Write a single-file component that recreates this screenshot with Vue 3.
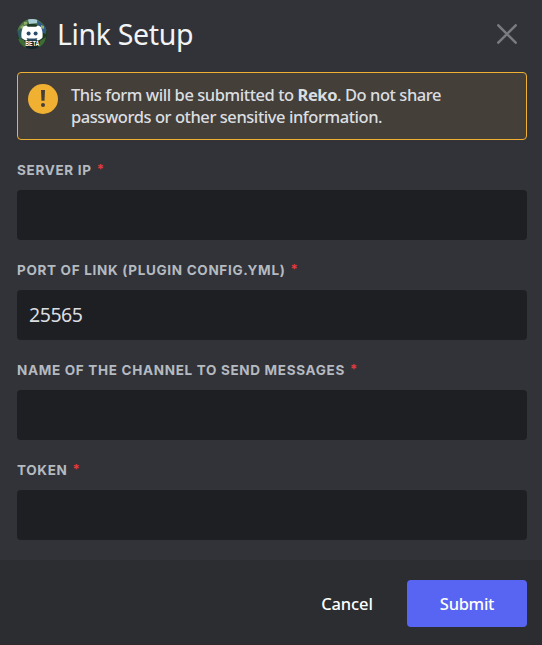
<script setup>
import { ref } from 'vue'

const fields = ref([
  { id: 'ip', label: 'Server IP', value: '' },
  { id: 'port', label: 'Port of link (plugin config.yml)', value: '25565' },
  { id: 'channel', label: 'Name of the channel to send messages', value: '' },
  { id: 'token', label: 'Token', value: '' },
])
</script>

<template>
  <form class="modal" @submit.prevent>
    <header class="header">
      <svg class="avatar" viewBox="0 0 30 30" aria-hidden="true">
        <defs>
          <clipPath id="avatar-clip"><circle cx="15" cy="15" r="15" /></clipPath>
        </defs>
        <g clip-path="url(#avatar-clip)">
          <rect width="30" height="30" fill="#1f3a24" />
          <path d="M0 0h30v12L22 6 12 4 4 12H0z" fill="#4f7a4a" />
          <path d="M11 0h10l-1 4-8 1z" fill="#a9cbd6" />
          <path d="M20 1l9 7v7l-5-2-3-7z" fill="#315a86" />
          <path d="M0 12l5-3 1 10-3 4z" fill="#2f5a60" />
          <path d="M3 8l3-2 2 2-3 2zM7 3l3 0 0 2-3 1zM24 6l3 1 0 3-3-1z" fill="#91ad62" />
          <path d="M1 20l6 1 3 9H5zM23 22l6-4-2 8-5 3z" fill="#3f6b35" />
          <path d="M8 22h14l-2 8H9z" fill="#14242c" />
          <path d="M9.500 6.500l1.300 1.300h8.400l1.300-1.300c2 .3 2.900.9 3.500 1.800 1.500 3.200 1.900 6.800 1.500 10.200-1.400 1.700-3.200 2.700-5.200 3l-1.500-1.700h-7.600l-1.500 1.700c-2-.3-3.800-1.300-5.200-3-.4-3.400 0-7 1.500-10.200.600-.9 1.500-1.500 3.500-1.800z" fill="#fff" />
          <circle cx="11.600" cy="14.500" r="2" fill="#294b69" />
          <circle cx="18.600" cy="14.500" r="2" fill="#294b69" />
          <path d="M9.500 19q5.500 1.700 11 0l-1.500 2.500h-8z" fill="#294b69" />
          <text class="avatar-text" x="8.300" y="27" textLength="14" lengthAdjust="spacingAndGlyphs">BETA</text>
        </g>
      </svg>
      <h1 class="title">Link Setup</h1>
      <button class="close" type="button" aria-label="Close">
        <svg viewBox="0 0 20 20"><path d="M1.300 1.300l17.400 17.400M18.700 1.300L1.300 18.700" /></svg>
      </button>
    </header>

    <div class="notice">
      <svg class="warning" viewBox="0 0 30 30" aria-hidden="true">
        <circle cx="15" cy="15" r="15" fill="#f0b132" />
        <path d="M13 6h4l-.5 10.700h-3z" fill="#443f38" />
        <circle cx="15" cy="21" r="2" fill="#443f38" />
      </svg>
      <p class="notice-text">
        <span class="line">This form will be submitted to <strong>Reko</strong>. Do not share</span>
        <span class="line">passwords or other sensitive information.</span>
      </p>
    </div>

    <main class="fields">
      <div v-for="field in fields" :key="field.id" class="field">
        <label class="label" :for="field.id">
          <span>{{ field.label }}</span><span class="required">*</span>
        </label>
        <input :id="field.id" v-model="field.value" class="input" type="text" />
      </div>
    </main>

    <footer class="footer">
      <button class="button cancel" type="button"><span>Cancel</span></button>
      <button class="button submit" type="submit"><span>Submit</span></button>
    </footer>
  </form>
</template>

<style>
body { background: #313338; }
</style>

<style scoped>
.modal {
  box-sizing: border-box;
  width: 542px;
  height: 645px;
  display: flex;
  flex-direction: column;
  overflow: hidden;
  background: #313338;
  font-family: "Noto Sans", "Open Sans", sans-serif;
  color: #dbdee1;
}
.header {
  height: 72px;
  box-sizing: border-box;
  padding: 0 25px 4px 17px;
  display: flex;
  align-items: center;
}
.avatar { width: 30px; height: 30px; flex: none; }
.avatar-text { font: 700 6.500px "Liberation Sans", sans-serif; fill: #fff; }
.title {
  margin: 0 auto 0 10px;
  font-size: 28.500px;
  line-height: 36px;
  font-weight: 400;
  letter-spacing: -0.350px;
  color: #f2f3f5;
}
.close { width: 20px; height: 20px; padding: 0; border: 0; background: none; }
.close svg { display: block; width: 20px; height: 20px; }
.close path { fill: none; stroke: #797b80; stroke-width: 2.500; stroke-linecap: round; }
.notice {
  box-sizing: border-box;
  height: 68px;
  margin: 0 15px 0 17px;
  padding: 11px 10px;
  display: flex;
  gap: 13px;
  border: 1px solid #f0b132;
  border-radius: 4px;
  background: #443f38;
}
.warning { width: 30px; height: 30px; flex: none; }
.notice-text {
  margin: 0;
  font-size: 16.500px;
  line-height: 22px;
  font-weight: 500;
  letter-spacing: -0.440px;
  white-space: nowrap;
}
.line { display: block; }
.notice-text strong { font-weight: 700; }
.fields { padding: 20px 15px 0 17px; display: flex; flex-direction: column; gap: 20px; }
.field { display: flex; flex-direction: column; gap: 10px; }
.label {
  height: 20px;
  display: flex;
  gap: 5px;
  font: 700 13.500px/20px Inter, sans-serif;
  letter-spacing: 0.680px;
  color: #b5bac1;
  text-transform: uppercase;
  white-space: nowrap;
}
.required { color: #e03a3e; font-size: 13px; line-height: 19px; }
.input {
  box-sizing: border-box;
  width: 100%;
  height: 50px;
  padding: 0 12px 2px;
  border: 0;
  outline: 0;
  border-radius: 4px;
  background: #1e1f22;
  color: #dbdee1;
  font: 400 19.500px "Noto Sans", sans-serif;
  letter-spacing: -0.450px;
}
.footer {
  height: 85px;
  margin-top: auto;
  box-sizing: border-box;
  padding: 20px 15px 0;
  display: flex;
  justify-content: flex-end;
  align-items: flex-start;
  background: #2b2d31;
  border-bottom: 1px solid #2d292d;
}
.button {
  height: 47px;
  width: 120px;
  padding: 0;
  border: 0;
  border-radius: 4px;
  background: none;
  color: #fff;
  font: 500 16.500px "Noto Sans", sans-serif;
  letter-spacing: -0.300px;
}
.cancel { letter-spacing: -0.100px; }
.submit { background: #5865f2; }
</style>
